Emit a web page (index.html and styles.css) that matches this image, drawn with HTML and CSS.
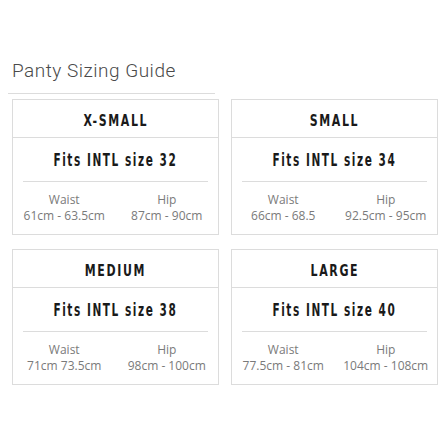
FILE: index.html
```html
<!DOCTYPE html>
<html>
<head>
<meta charset="utf-8">
<link rel="stylesheet" href="styles.css">
</head>
<body>
<div class="page">
  <div class="title-wrap"><h1 class="title">Panty Sizing Guide</h1></div>
  <div class="grid">
    <div class="card">
      <div class="size"><span class="cond">X-SMALL</span></div>
      <div class="fits"><span class="cond">Fits INTL size 32</span></div>
      <div class="measures">
        <div class="col"><div class="label">Waist</div><div class="value">61cm - 63.5cm</div></div>
        <div class="col"><div class="label">Hip</div><div class="value">87cm - 90cm</div></div>
      </div>
    </div>
    <div class="card">
      <div class="size"><span class="cond">SMALL</span></div>
      <div class="fits"><span class="cond">Fits INTL size 34</span></div>
      <div class="measures">
        <div class="col"><div class="label">Waist</div><div class="value">66cm - 68.5</div></div>
        <div class="col"><div class="label">Hip</div><div class="value">92.5cm - 95cm</div></div>
      </div>
    </div>
    <div class="card">
      <div class="size"><span class="cond">MEDIUM</span></div>
      <div class="fits"><span class="cond">Fits INTL size 38</span></div>
      <div class="measures">
        <div class="col"><div class="label">Waist</div><div class="value">71cm 73.5cm</div></div>
        <div class="col"><div class="label">Hip</div><div class="value">98cm - 100cm</div></div>
      </div>
    </div>
    <div class="card">
      <div class="size"><span class="cond">LARGE</span></div>
      <div class="fits"><span class="cond">Fits INTL size 40</span></div>
      <div class="measures">
        <div class="col"><div class="label">Waist</div><div class="value">77.5cm - 81cm</div></div>
        <div class="col"><div class="label">Hip</div><div class="value">104cm - 108cm</div></div>
      </div>
    </div>
  </div>
</div>
</body>
</html>
```
FILE: styles.css
```css
html, body { margin: 0; padding: 0; background: #fff; }
.page { padding: 59px 8px 0 12px; }
.title-wrap { width: 207px; margin-left: -4px; border-bottom: 1px solid #dcdcdc; margin-bottom: 5px; }
.title {
  margin: 0; padding: 0 0 10px 4px;
  font-family: "Roboto", "Liberation Sans", sans-serif; font-weight: 300; font-size: 19px; line-height: 24px;
  letter-spacing: 0.5px; color: #4a4a4a;
}
.grid { display: grid; grid-template-columns: 207px 207px; column-gap: 12px; row-gap: 14px; }
.card { border: 1px solid #dcdcdc; height: 134px; display: flex; flex-direction: column; }
.cond {
  display: inline-block; white-space: nowrap;
  font-family: "DejaVu Sans Condensed", "DejaVu Sans", sans-serif; font-weight: bold;
  color: #1a1a1a; transform-origin: center;
}
.size {
  height: 34px; padding-top: 3px; border-bottom: 1px solid #dcdcdc;
  display: flex; align-items: center; justify-content: center;
  font-size: 16.5px; letter-spacing: 2.2px;
}
.size .cond { transform: scaleX(0.74); }
.fits {
  margin: 0 10px; height: 43px; border-bottom: 1px solid #dcdcdc;
  display: flex; align-items: center; justify-content: center;
  font-size: 18px; letter-spacing: 2.4px;
}
.fits .cond { transform: scaleX(0.65); }
.measures { display: grid; grid-template-columns: 1fr 1fr; padding-top: 10px; }
.col { text-align: center; font-family: "Open Sans", sans-serif; font-size: 12px; line-height: 16px; color: #7a7a7a; }
```
